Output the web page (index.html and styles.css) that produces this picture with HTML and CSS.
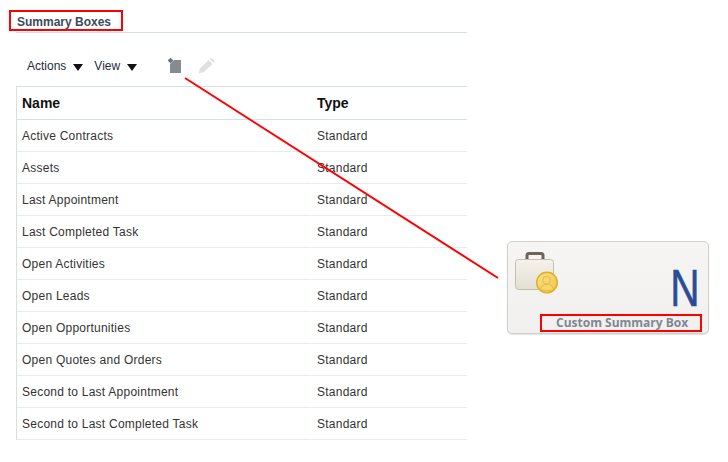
FILE: index.html
```html
<!DOCTYPE html>
<html lang="en">
<head>
<meta charset="utf-8">
<title>Summary Boxes</title>
<link rel="stylesheet" href="styles.css">
</head>
<body>
<main class="panel">
  <h1 class="title">Summary Boxes</h1>
  <div class="toolbar">
    <span class="menu">Actions<i class="caret"></i></span>
    <span class="menu">View<i class="caret"></i></span>
    <svg class="icon-new" width="14" height="16" viewBox="0 0 14 16">
      <path d="M6 2h7v13H2V6z" fill="#868b8f"/>
      <path d="M2.500 0v5M0 2.500h5M.8.8l3.400 3.400M4.200.8L.8 4.200" stroke="#70757a" stroke-width="1.200"/>
    </svg>
    <svg class="icon-edit" width="17" height="16" viewBox="0 0 17 16">
      <path d="M.5 15.500l1.500-5L10.500 2l4 4L6 14z" fill="#dfe0e0"/>
      <path d="M11.700 .9Q13 -.3 14.500 .7l1.300 1.200q1 1.400 -.1 2.800z" fill="#dfe0e0"/>
    </svg>
  </div>
  <table class="grid">
    <thead>
      <tr><th class="col-name">Name</th><th>Type</th></tr>
    </thead>
    <tbody>
      <tr><td class="col-name">Active Contracts</td><td>Standard</td></tr>
      <tr><td class="col-name">Assets</td><td>Standard</td></tr>
      <tr><td class="col-name">Last Appointment</td><td>Standard</td></tr>
      <tr><td class="col-name">Last Completed Task</td><td>Standard</td></tr>
      <tr><td class="col-name">Open Activities</td><td>Standard</td></tr>
      <tr><td class="col-name">Open Leads</td><td>Standard</td></tr>
      <tr><td class="col-name">Open Opportunities</td><td>Standard</td></tr>
      <tr><td class="col-name">Open Quotes and Orders</td><td>Standard</td></tr>
      <tr><td class="col-name">Second to Last Appointment</td><td>Standard</td></tr>
      <tr><td class="col-name">Second to Last Completed Task</td><td>Standard</td></tr>
    </tbody>
  </table>
</main>

<aside class="card">
  <svg class="case" width="46" height="46" viewBox="0 0 46 46">
    <defs>
      <linearGradient id="body" x1="0" y1="0" x2="0" y2="1"><stop offset="0" stop-color="#f4f2ec"/><stop offset="1" stop-color="#e2dfd2"/></linearGradient>
      <linearGradient id="coin" x1="0" y1="0" x2="1" y2="1"><stop offset="0" stop-color="#f9e289"/><stop offset="1" stop-color="#eec44a"/></linearGradient>
    </defs>
    <path d="M12 8.500V4.500Q12 2.500 14 2.500H26Q28 2.500 28 4.500V8.500" fill="none" stroke="#6b635c" stroke-width="3"/>
    <rect x=".5" y="8.500" width="38" height="30" rx="3" fill="url(#body)" stroke="#c4bfac"/>
    <circle cx="32" cy="31.500" r="10.300" fill="url(#coin)" stroke="#e3ae22" stroke-width="1.400"/>
    <circle cx="31.500" cy="29" r="3.800" fill="#f6d768" stroke="#e2b840" stroke-width=".8"/>
    <path d="M25.500 38.500q.5-4 4-5h4.500q3.500 1 4.500 5q-6.500 2.500-13 0z" fill="#f6d768" stroke="#e2b840" stroke-width=".8"/>
  </svg>
  <span class="letter">N</span>
  <span class="caption">Custom Summary Box</span>
</aside>

<div class="mark mark-title"></div>
<div class="mark mark-caption"></div>
<svg class="leader" width="728" height="462" viewBox="0 0 728 462">
  <line x1="185" y1="78" x2="498" y2="278" stroke="#ff0000" stroke-width="2"/>
</svg>
</body>
</html>
```
FILE: styles.css
```css
* { box-sizing: border-box; }
html, body { margin: 0; padding: 0; background: #fff; }
body {
  width: 728px;
  height: 462px;
  overflow: hidden;
  position: relative;
  font-family: "Liberation Sans", Arial, sans-serif;
  font-size: 12px;
  color: #333;
}
.panel { width: 451px; margin-left: 16px; }
.title {
  margin: 0;
  height: 33px;
  padding: 15px 0 0 1px;
  font-size: 12px;
  line-height: 14px;
  font-weight: bold;
  color: #3c4a5c;
  border-bottom: 1px solid #d6dfe6;
}
.toolbar {
  display: flex;
  align-items: center;
  height: 53px;
  padding: 13px 0 0 11px;
}
.menu {
  display: inline-flex;
  align-items: center;
  color: #1f2d3d;
  margin-right: 11.500px;
}
.caret {
  width: 0;
  height: 0;
  margin-left: 6.500px;
  margin-top: 2px;
  border-left: 5px solid transparent;
  border-right: 5px solid transparent;
  border-top: 7px solid #111;
}
.icon-new { margin-left: 20px; }
.icon-edit { margin-left: 16px; }
.grid {
  width: 451px;
  border-collapse: separate;
  border-spacing: 0;
  table-layout: fixed;
  border-top: 1px solid #d6dfe6;
  border-left: 1px solid #d6dfe6;
}
.grid th, .grid td {
  padding: 0 0 0 5px;
  text-align: left;
}
.col-name { width: 295px; }
.grid .col-name { border-right: 1px solid #fff; }
.grid th {
  height: 33px;
  font-size: 14px;
  font-weight: bold;
  color: #111;
  border-bottom: 1px solid #d6dfe6;
}
.grid th.col-name { border-right: 0; }
.grid td {
  height: 32px;
  padding-top: 1px;
  color: #333;
  letter-spacing: .24px;
  border-bottom: 1px solid #e8ebee;
}
.card {
  position: absolute;
  left: 507px;
  top: 241px;
  width: 202px;
  height: 93px;
  border: 1px solid #d0d0cc;
  border-radius: 5px;
  background: linear-gradient(#f6f5f3, #f1f0ee);
  box-shadow: 0 1px 1px rgba(0,0,0,.12);
}
.case { position: absolute; left: 7px; top: 9px; }
.letter {
  position: absolute;
  right: 8px;
  top: 20px;
  font-size: 52px;
  line-height: 52px;
  color: #2b4c96;
  -webkit-text-stroke: .6px #2b4c96;
  transform: scaleX(.78);
  transform-origin: right center;
}
.caption {
  position: absolute;
  left: 48px;
  top: 73px;
  font-family: "Open Sans", sans-serif;
  font-size: 12px;
  line-height: 16px;
  font-weight: bold;
  color: #7f8792;
  white-space: nowrap;
}
.mark { position: absolute; border: 2px solid #ff0000; }
.mark-title { left: 9px; top: 10px; width: 114px; height: 21px; }
.mark-caption { left: 540px; top: 314px; width: 162px; height: 18px; }
.leader { position: absolute; left: 0; top: 0; pointer-events: none; }
```
